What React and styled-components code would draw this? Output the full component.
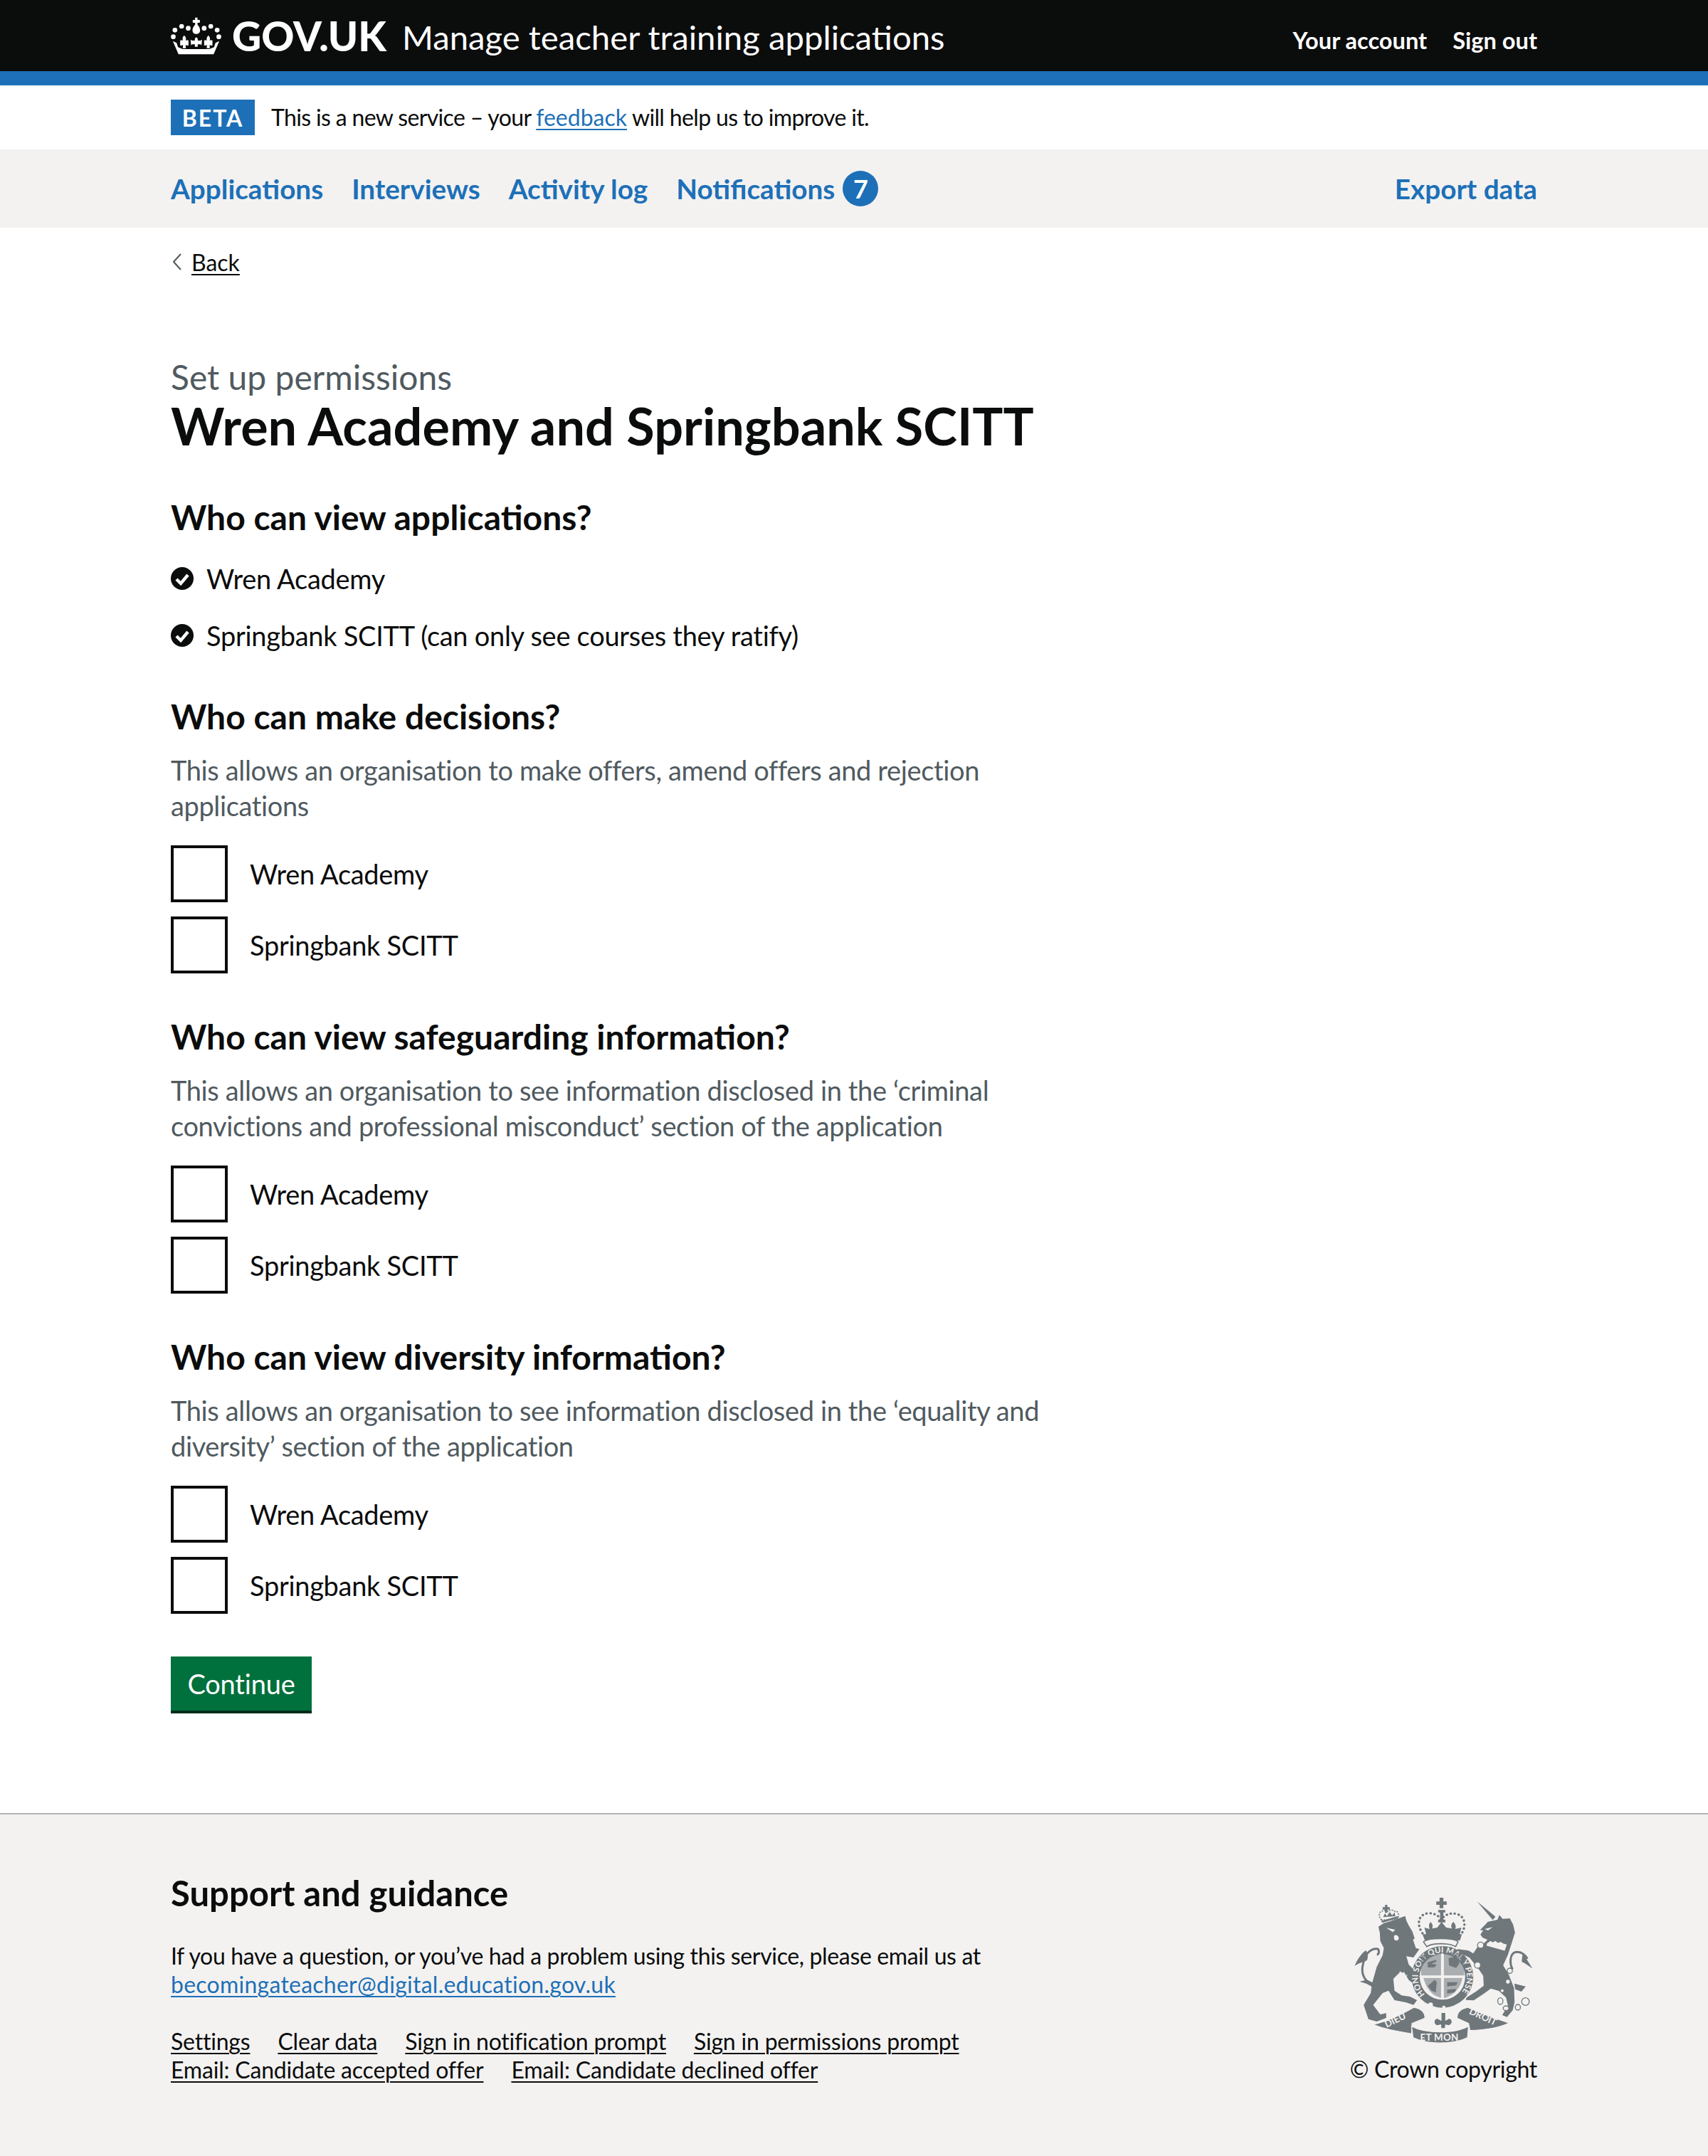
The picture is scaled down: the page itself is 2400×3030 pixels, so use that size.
import React from "react";
import styled, { createGlobalStyle } from "styled-components";

const Global = createGlobalStyle`
  html, body { margin: 0; padding: 0; background: #fff; }
  body { font-family: "Lato", "Noto Sans", Arial, sans-serif; color: #0b0c0c; }
  * { box-sizing: border-box; }
`;

const Container = styled.div`
  width: 1920px;
  margin: 0 auto;
`;
const HeaderBar = styled.header`
  background: #0b0c0c;
  height: 120px;
  border-bottom: 20px solid #1d70b8;
`;
const HeaderInner = styled(Container)`
  display: flex;
  align-items: center;
  justify-content: space-between;
  height: 100px;
`;
const Brand = styled.div`
  display: flex;
  align-items: center;
  color: #fff;
`;
const Wordmark = styled.span`
  font-size: 57px;
  font-weight: 900;
  margin-left: 14px;
  line-height: 1;
`;
const ServiceName = styled.span`
  font-size: 47.3px;
  font-weight: 400;
  margin: 3px 0 0 22px;
  line-height: 1;
`;
const AccountNav = styled.nav`
  display: flex;
  gap: 36px;
  margin-top: 13px;
`;
const AccountLink = styled.a`
  color: #fff;
  font-size: 32.6px;
  font-weight: 700;
  line-height: 40px;
`;
const PhaseBanner = styled(Container)`
  display: flex;
  align-items: center;
  height: 90px;
`;
const PhaseTag = styled.strong`
  background: #1d70b8;
  color: #fff;
  font-size: 32px;
  font-weight: 700;
  letter-spacing: 2px;
  height: 50px;
  width: 118px;
  display: flex;
  align-items: center;
  justify-content: center;
  margin-right: 23px;
`;
const PhaseText = styled.span`
  font-size: 32px;
  line-height: 40px;
  letter-spacing: -0.65px;
`;
const InlineLink = styled.a`
  color: #1d70b8;
  text-decoration: underline;
  text-decoration-thickness: 2px;
  text-underline-offset: 4px;
  letter-spacing: ${(p) => p.$spacing || 0}px;
`;
const NavBar = styled.nav`
  background: #f3f2f1;
  height: 110px;
`;
const NavInner = styled(Container)`
  display: flex;
  align-items: center;
  justify-content: space-between;
  height: 100%;
`;
const NavList = styled.div`
  display: flex;
  align-items: center;
  gap: 40px;
`;
const NavLink = styled.a`
  color: #1d70b8;
  font-size: 38.7px;
  font-weight: 700;
  line-height: 50px;
  display: flex;
  align-items: center;
`;
const Badge = styled.span`
  width: 50px;
  height: 50px;
  border-radius: 50%;
  background: #1d70b8;
  color: #fff;
  font-size: 36px;
  font-weight: 700;
  display: flex;
  align-items: center;
  justify-content: center;
  margin-left: 11px;
`;
const BackRow = styled.div`
  display: flex;
  align-items: center;
  margin-top: 28px;
  height: 40px;
  font-size: 32px;
`;
const BackChevron = styled.svg`
  width: 12px;
  height: 24px;
  margin: 0 14px 0 3px;
`;
const BackLink = styled.a`
  color: #0b0c0c;
  text-decoration: underline;
  text-decoration-thickness: 2px;
  text-underline-offset: 4px;
`;
const Main = styled.main`
  padding-top: 114px;
  width: 1280px;
`;
const Caption = styled.span`
  display: block;
  color: #505a5f;
  font-size: 48px;
  line-height: 56px;
`;
const Title = styled.h1`
  margin: 0 0 59px;
  font-size: 72px;
  font-weight: 700;
  line-height: 80px;
  white-space: nowrap;
`;
const SectionHeading = styled.h2`
  margin: 0 0 ${(p) => p.$gap}px;
  font-size: 48px;
  font-weight: 700;
  line-height: 60px;
`;
const Section = styled.section`
  margin-bottom: 59px;
`;
const Hint = styled.p`
  margin: 0 0 31px;
  color: #505a5f;
  font-size: 38px;
  line-height: 50px;
  letter-spacing: -0.37px;
`;
const GrantedList = styled.ul`
  list-style: none;
  margin: 0;
  padding: 0;
  display: flex;
  flex-direction: column;
  gap: 30px;
`;
const GrantedItem = styled.li`
  display: flex;
  align-items: center;
  gap: 18px;
  font-size: 38px;
  line-height: 50px;
  letter-spacing: -0.28px;
`;
const CheckRow = styled.label`
  display: flex;
  align-items: center;
  gap: 31px;
  font-size: 38px;
  line-height: 50px;
  letter-spacing: -0.3px;
  height: 80px;
  margin-bottom: 20px;
  &:last-child { margin-bottom: 0; }
`;
const CheckBox = styled.span`
  display: block;
  width: 80px;
  height: 80px;
  border: 4px solid #0b0c0c;
  background: #fff;
`;
const Button = styled.button`
  display: block;
  width: 198px;
  height: 80px;
  margin-top: 60px;
  background: #00703c;
  color: #fff;
  border: 0;
  border-bottom: 4px solid #002d18;
  font-family: inherit;
  font-size: 38px;
  line-height: 50px;
  letter-spacing: -0.2px;
  padding: 0;
`;
const Footer = styled.footer`
  margin-top: 140px;
  background: #f3f2f1;
  border-top: 2px solid #b1b4b6;
  height: 482px;
`;
const FooterInner = styled(Container)`
  display: flex;
  justify-content: space-between;
  padding-top: 80px;
`;
const FooterLeft = styled.div`
  width: 1280px;
`;
const FooterHeading = styled.h2`
  margin: 0 0 39px;
  font-size: 49px;
  font-weight: 700;
  line-height: 60px;
`;
const FooterText = styled.p`
  margin: 0 0 40px;
  font-size: 32px;
  line-height: 40px;
  letter-spacing: -0.36px;
`;
const FooterLinks = styled.div`
  display: flex;
  column-gap: 39px;
  font-size: 32px;
  line-height: 40px;
  letter-spacing: -0.2px;
`;
const Licence = styled.div`
  display: flex;
  flex-direction: column;
  align-items: flex-end;
  padding-top: 36px;
  font-size: 32px;
  line-height: 40px;
  letter-spacing: -0.3px;
`;
const Crest = styled.svg`
  width: 257px;
  height: 210px;
  margin: 0 2px 12px 0;
  display: block;
`;

const CrownLogo = () => (
  <svg width="72" height="55" viewBox="45 30 215 165" fill="#fff" aria-hidden="true">
    {[[62,88],[90,72],[118,80],[185,80],[213,72],[240,88],[55,116],[247,116]].map(([x,y]) => (
      <circle key={x+"-"+y} cx={x} cy={y} r="10" />
    ))}
    <path d="M147 35h10v10h10v12h-10v8c8 8 11 16 11 24 0 9-7 15-16 15s-16-6-16-15c0-8 3-16 11-24v-8h-10V45h10z" />
    <path d="M152 118l6 6v8h12l6-4-2 24-4-4h-12v10h-12v-10h-12l-4 4-2-24 6 4h12v-8z" />
    <path d="M101 110c8 8 9 14 6 22 4-2 8-2 12 0v20c-4 2-8 1-12-2l1 14H95l1-14c-4 3-8 4-12 2v-20c4-2 8-2 12 0-3-8-3-14 5-22z" />
    <path d="M203 110c8 8 8 14 5 22 4-2 8-2 12 0v20c-4 2-8 1-12-2l1 14h-13l1-14c-4 3-8 4-12 2v-20c4-2 8-2 12 0-3-8-2-14 6-22z" />
    <path d="M53 134l16 8 6 18 20 8h112l20-8 6-18 16-8-24 56H77z" />
  </svg>
);

const Tick = () => (
  <svg width="32" height="32" viewBox="0 0 32 32" aria-hidden="true">
    <circle cx="16" cy="16" r="16" fill="#0b0c0c" />
    <path d="M8 17l6 6 10-12" fill="none" stroke="#fff" strokeWidth="4.4" />
  </svg>
);

const ink = "#6f777b";
const bg = "#f3f2f1";

const RoyalCrest = () => (
  <Crest viewBox="65 75 770 630" aria-hidden="true">
    <path fill={bg} stroke={ink} strokeWidth="5" strokeDasharray="6 5" d="M186 172c-18-18-12-40 14-40 4 0 8 2 10 4 10-8 24-8 32 0 16-4 20 22 8 34z" />
    <path fill={ink} d="M200 108h10v10h10v10h-10v14h-10v-14h-10v-10h10zM184 176l68-20 4 8-68 20z" />
    <path fill={ink} d="M192 160l8-16 8 12 12-18 10 14 10-12 4 16z" />
    <path fill={ink} d="M172 200l23-15 35-10 55-20 5 20 10 20 15 25 10 30-7 5 12 35 15 5-25 35-30-5 10 35 30 30 5 30-15 20-20-15-15-25-20-10-30 30 5 50 30 20 35 5 30 15-15 20-30-10-50-10-25-40-25 10-40 50 30 40 25-5v20l-40 15-35-10-20-60 30-50 5-40 20-70 25-50 5-30-15-30-2-35z" />
    <path fill="none" stroke={ink} strokeWidth="9" d="M150 445c-30-10-56-40-42-90 8-40 30-62 56-62 14 0 12 22 2 26" />
    <path fill={ink} d="M120 300c-18 10-38 40-48 66 18-14 34-14 52-24 6-14 4-28-4-42zM92 432c20 4 38 10 58 26l2-20-28-14z" />
    <path d="M205 205l38 8-10 10zM238 238c8-6 20 0 20 12 0 10-16 12-20 2z" fill={bg} />
    <path d="M290 328l38 50-6 4z" fill={bg} />
    <path d="M262 386l10 14 8-10 8 18 8-8-12 22-22-16z" fill={bg} />
    <path fill={ink} d="M588 94l78 64-12 14z" />
    <path fill={ink} d="M600 215l34-36 40-8 8-20 14 16 30-2 14 26 8 34-14 44-16 50-20 44 24 40 14 36 8 20 2 60-8 34-24 28-20-8 24-40-8-34-30-28-34-10-30 22-42 28-34-2 4-10 40-26 32-24-2-42-22-32-36-44-40-20-18-6 8-10 46 6 20 12 24-36 20-6 16-16-20-8-10-14 12-18z" />
    <path fill="none" stroke={ink} strokeWidth="9" d="M738 380c-14-24-12-64 10-72 28-8 48 18 52 28" />
    <path fill={ink} d="M780 314c12 14 26 38 42 62-20-12-28-20-46-28zM745 440l48 12-18 22-26-10z" />
    <path d="M628 270l16-12 10 6 12-6 10 8 12-4 12 8 16 4-10 30-80-22z" fill={bg} stroke={ink} strokeWidth="4" />
    <g fill={bg} stroke={ink} strokeWidth="4">
      <circle cx="603" cy="278" r="13" />
      <circle cx="590" cy="362" r="13" />
      <circle cx="726" cy="386" r="11" />
      <ellipse cx="686" cy="514" rx="11" ry="14" />
      <ellipse cx="710" cy="544" rx="12" ry="10" />
      <ellipse cx="760" cy="540" rx="11" ry="12" />
      <circle cx="792" cy="516" r="16" />
    </g>
    <g fill={bg}>
      <circle cx="718" cy="432" r="8" />
      <circle cx="694" cy="470" r="6" />
      <path d="M620 210l34-8-20 14z" />
    </g>
    <path fill={ink} d="M430 78h16v16h14v14h-14v14h-16v-14h-14V94h14zM424 130h30v10h-8v30h8v12h-30v-12h8v-30h-8z" />
    <path fill="none" stroke={ink} strokeWidth="10" strokeLinecap="round" strokeDasharray="1 16" d="M358 228c-22-30-24-76 20-84 30-4 52 14 60 26 10-16 32-30 62-24 38 8 44 52 22 84" />
    <path fill={ink} d="M392 180c8 8 12 18 6 28l22-4 18-24 20 24 24 4c-6-12-2-20 6-28 10 10 12 20 8 30l26-6-8 30H374l-8-30 22 6c-4-10-4-20 4-30z" />
    <path fill={ink} d="M358 232h166l-8 26H368z" />
    <path fill={bg} stroke={ink} strokeWidth="5" d="M362 264c20-18 130-18 146 0l-10 20c-30-16-96-16-122 0z" />
    <circle cx="442" cy="412" r="130" fill={ink} />
    <circle cx="442" cy="412" r="96" fill={bg} />
    <defs>
      <path id="garter-line" d="M 369 485 A 103 103 0 1 1 515 485" />
    </defs>
    <text fill={bg} fontFamily="Lato, sans-serif" fontSize="34" fontWeight="700">
      <textPath href="#garter-line" textLength="470" lengthAdjust="spacing">HONI SOIT QUI MAL Y PENSE</textPath>
    </text>
    <path fill={ink} d="M352 318h84v88h-84z M448 310h86v96h-86z M362 416h74v84c-30-6-60-30-74-84z M448 416h78c-6 44-40 76-78 86z" opacity="0.55" />
    <path stroke={bg} strokeWidth="8" d="M442 312v190M346 411h190" fill="none" />
    <path fill={ink} d="M380 350l36-10v8l-20 8 22 4-10 12h-28zM380 450l30-26 8 10-4 44-18-8z M468 332l34-6 12 28-14 20-30-10zM462 434l44 0-6 14-38 4zM462 466l38-4-6 14-32 6z" />
    <circle cx="392" cy="530" r="10" fill={bg} />
    <circle cx="448" cy="540" r="7" fill={bg} />
    <path fill={ink} d="M438 564h16v34l16-10c16 4 14 24-2 28l-14-4-2 16h-14l-2-16-16 4c-14-4-16-24 0-28l18 10z" />
    <path fill={ink} stroke={bg} strokeWidth="4" d="M150 612c60-12 120-42 172-72 30 4 48 22 46 46l-54 22-2 44c-50-10-110-16-162-40z" />
    <path fill={ink} stroke={bg} strokeWidth="4" d="M312 620c60 32 180 32 240 0l-4 48c-60 30-170 30-230 0z" />
    <path fill={ink} stroke={bg} strokeWidth="4" d="M724 606c-56-18-120-40-176-66-30 6-46 24-44 46l48 22 6 30c60-2 118-10 166-32z" />
    <g fill={bg} fontFamily="Lato, sans-serif" fontSize="40" fontWeight="700">
      <text transform="translate(206 626) rotate(-25)">DIEU</text>
      <text x="348" y="680" letterSpacing="1">ET MON</text>
      <text transform="translate(552 566) rotate(25)">DROIT</text>
    </g>
  </Crest>
);

const Choices = () => (
  <div>
    <CheckRow><CheckBox />Wren Academy</CheckRow>
    <CheckRow><CheckBox />Springbank SCITT</CheckRow>
  </div>
);

export default function App() {
  return (
    <>
      <Global />
      <HeaderBar>
        <HeaderInner>
          <Brand>
            <CrownLogo />
            <Wordmark>GOV.UK</Wordmark>
            <ServiceName>Manage teacher training applications</ServiceName>
          </Brand>
          <AccountNav>
            <AccountLink>Your account</AccountLink>
            <AccountLink>Sign out</AccountLink>
          </AccountNav>
        </HeaderInner>
      </HeaderBar>
      <PhaseBanner>
        <PhaseTag>BETA</PhaseTag>
        <PhaseText>
          This is a new service – your <InlineLink>feedback</InlineLink> will help us to improve it.
        </PhaseText>
      </PhaseBanner>
      <NavBar>
        <NavInner>
          <NavList>
            <NavLink>Applications</NavLink>
            <NavLink>Interviews</NavLink>
            <NavLink>Activity log</NavLink>
            <NavLink>Notifications<Badge>7</Badge></NavLink>
          </NavList>
          <NavLink>Export data</NavLink>
        </NavInner>
      </NavBar>
      <Container>
        <BackRow>
          <BackChevron viewBox="0 0 12 24">
            <path d="M11 1L1 12l10 11" fill="none" stroke="#505a5f" strokeWidth="2" />
          </BackChevron>
          <BackLink>Back</BackLink>
        </BackRow>
        <Main>
          <Caption>Set up permissions</Caption>
          <Title>Wren Academy and Springbank SCITT</Title>
          <Section>
            <SectionHeading $gap={31}>Who can view applications?</SectionHeading>
            <GrantedList>
              <GrantedItem><Tick />Wren Academy</GrantedItem>
              <GrantedItem><Tick />Springbank SCITT (can only see courses they ratify)</GrantedItem>
            </GrantedList>
          </Section>
          <Section>
            <SectionHeading $gap={20}>Who can make decisions?</SectionHeading>
            <Hint>This allows an organisation to make offers, amend offers and rejection applications</Hint>
            <Choices />
          </Section>
          <Section>
            <SectionHeading $gap={20}>Who can view safeguarding information?</SectionHeading>
            <Hint>This allows an organisation to see information disclosed in the ‘criminal convictions and professional misconduct’ section of the application</Hint>
            <Choices />
          </Section>
          <Section>
            <SectionHeading $gap={20}>Who can view diversity information?</SectionHeading>
            <Hint>This allows an organisation to see information disclosed in the ‘equality and diversity’ section of the application</Hint>
            <Choices />
          </Section>
          <Button>Continue</Button>
        </Main>
      </Container>
      <Footer>
        <FooterInner>
          <FooterLeft>
            <FooterHeading>Support and guidance</FooterHeading>
            <FooterText>
              If you have a question, or you’ve had a problem using this service, please email us at<br />
              <InlineLink $spacing={0.25}>becomingateacher@digital.education.gov.uk</InlineLink>
            </FooterText>
            <FooterLinks>
              <BackLink>Settings</BackLink>
              <BackLink>Clear data</BackLink>
              <BackLink>Sign in notification prompt</BackLink>
              <BackLink>Sign in permissions prompt</BackLink>
            </FooterLinks>
            <FooterLinks>
              <BackLink>Email: Candidate accepted offer</BackLink>
              <BackLink>Email: Candidate declined offer</BackLink>
            </FooterLinks>
          </FooterLeft>
          <Licence>
            <RoyalCrest />
            © Crown copyright
          </Licence>
        </FooterInner>
      </Footer>
    </>
  );
}
